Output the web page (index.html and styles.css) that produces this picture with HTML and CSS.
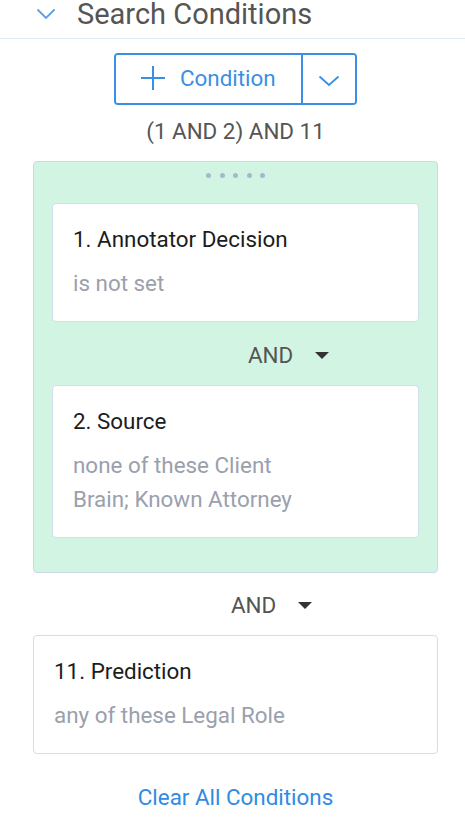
FILE: index.html
```html
<!DOCTYPE html>
<html lang="en">
<head>
  <meta charset="UTF-8">
  <meta name="viewport" content="width=device-width, initial-scale=1.0">
  <title>Search Conditions</title>
  <link rel="stylesheet" href="styles.css">
</head>
<body>
  <div class="header">
    <svg class="header-chevron" width="20" height="12" viewBox="0 0 20 12">
      <path d="M1.5 1.5 L10 10 L18.5 1.5" fill="none" stroke="#5c9fe6" stroke-width="1.8"/>
    </svg>
    <h2>Search Conditions</h2>
  </div>

  <div class="panel">
    <div class="add-row">
      <div class="split-btn">
        <button class="add-btn" type="button">
          <svg width="26" height="26" viewBox="0 0 26 26">
            <path d="M13 1 V25 M1 13 H25" stroke="#3b8fe2" stroke-width="2"/>
          </svg>
          <span>Condition</span>
        </button>
        <button class="more-btn" type="button">
          <svg width="22" height="12" viewBox="0 0 22 12">
            <path d="M1.5 1.5 L11 10 L20.5 1.5" fill="none" stroke="#3b8fe2" stroke-width="1.8"/>
          </svg>
        </button>
      </div>
    </div>

    <p class="formula">(1 AND 2) AND 11</p>

    <div class="group">
      <div class="handle">
        <span></span><span></span><span></span><span></span><span></span>
      </div>

      <div class="card">
        <div class="title">1. Annotator Decision</div>
        <div class="sub">is not set</div>
      </div>

      <div class="op">AND <i class="caret"></i></div>

      <div class="card">
        <div class="title">2. Source</div>
        <div class="sub">none of these Client Brain; Known Attorney</div>
      </div>
    </div>

    <div class="op op-outer">AND <i class="caret"></i></div>

    <div class="card card-outer">
      <div class="title">11. Prediction</div>
      <div class="sub">any of these Legal Role</div>
    </div>

    <a class="clear" href="#">Clear All Conditions</a>
  </div>
</body>
</html>
```

FILE: styles.css
```css
* {
  box-sizing: border-box;
}

body {
  margin: 0;
  background: #fff;
  font-family: Roboto, "Noto Sans", Arial, sans-serif;
  font-size: 22.4px;
  line-height: 1.5;
  color: #222;
}

.header {
  display: flex;
  align-items: flex-start;
  height: 39px;
  padding-left: 36px;
  border-bottom: 1px solid #e1ecf8;
}

.header-chevron {
  margin-top: 8px;
  margin-right: 21px;
}

.header h2 {
  margin: 0;
  font-size: 29px;
  font-weight: 400;
  line-height: 28px;
  color: #555;
}

.panel {
  padding: 0 27px 0 33px;
}

.add-row {
  display: flex;
  justify-content: center;
  margin-top: 14px;
}

.split-btn {
  display: flex;
  border: 2px solid #3b8fe2;
  border-radius: 4px;
  height: 52px;
}

.split-btn button {
  display: flex;
  align-items: center;
  background: #fff;
  border: 0;
  padding: 0;
  font-family: inherit;
  font-size: 22.4px;
  color: #3b8fe2;
  cursor: pointer;
}

.add-btn {
  width: 187px;
  padding: 0 0 3px 24px !important;
  gap: 14px;
  border-right: 2px solid #3b8fe2 !important;
  border-radius: 2px 0 0 2px;
}

.more-btn {
  width: 52px;
  justify-content: center;
  padding-top: 3px !important;
  border-radius: 0 2px 2px 0;
}

.formula {
  margin: 10px 0 12px;
  text-align: center;
  color: #555;
}

.group {
  background: #d1f5e2;
  border: 1px solid #cbd9e8;
  border-radius: 4px;
  padding: 0 18px 34px;
}

.handle {
  display: flex;
  justify-content: center;
  gap: 8.5px;
  padding: 11px 0 25px;
}

.handle span {
  width: 5px;
  height: 5px;
  border-radius: 50%;
  background: #aab5d4;
}

.card {
  background: #fff;
  border: 1px solid #d3deec;
  border-radius: 4px;
  padding: 19px 20px 20px;
}

.title {
  margin-bottom: 11px;
  color: #1c1c1c;
}

.sub {
  max-width: 240px;
  color: #9aa0ad;
}

.op {
  display: flex;
  align-items: center;
  height: 63px;
  padding-top: 5px;
  padding-left: 196px;
  color: #555;
}

.op-outer {
  height: 62px;
  padding-top: 4px;
  padding-left: 198px;
}

.caret {
  width: 0;
  height: 0;
  margin-left: 22px;
  border-left: 7px solid transparent;
  border-right: 7px solid transparent;
  border-top: 7px solid #333;
}

.clear {
  display: block;
  margin-top: 27px;
  text-align: center;
  text-decoration: none;
  color: #2f8be4;
}
```
